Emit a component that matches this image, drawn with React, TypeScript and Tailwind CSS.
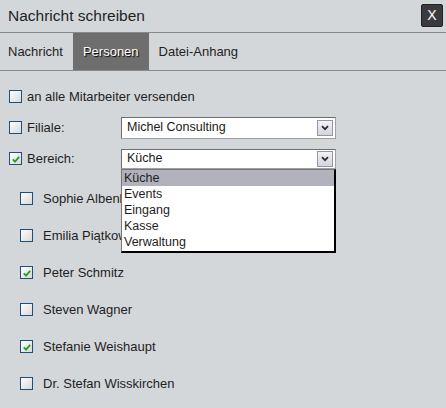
import { useState } from 'react';

const people = [
  { name: 'Sophie Albenberg', checked: false },
  { name: 'Emilia Piątkowska', checked: false },
  { name: 'Peter Schmitz', checked: true },
  { name: 'Steven Wagner', checked: false },
  { name: 'Stefanie Weishaupt', checked: true },
  { name: 'Dr. Stefan Wisskirchen', checked: false },
];

const bereiche = ['Küche', 'Events', 'Eingang', 'Kasse', 'Verwaltung'];

function Checkbox({ checked }: { checked?: boolean }) {
  return (
    <div className="relative w-[13px] h-[13px] shrink-0 border border-[#1f4f7a] bg-gradient-to-br from-white to-[#d8d8d8]">
      {checked && (
        <svg className="absolute left-[2px] top-[3px]" width="8" height="7" viewBox="0 0 8 7">
          <path d="M0.8 3.4 L3 5.6 L7.2 0.8" fill="none" stroke="#23a023" strokeWidth="1.8" />
        </svg>
      )}
    </div>
  );
}

function Select({ value, h }: { value: string; h: string }) {
  return (
    <div className={`w-[215px] ${h} flex items-center justify-between bg-white border border-[#a0a0a0] border-t-[#6e6e6e] border-l-[#6e6e6e] pl-[5px] pr-[2px]`}>
      <span className="text-[12.5px] text-[#1a1a1a]">{value}</span>
      <div className="w-[16px] h-[16px] flex items-center justify-center border border-[#9494ac] bg-gradient-to-b from-[#f2f2f7] to-[#d4d4de]">
        <svg width="8" height="6" viewBox="0 0 8 6">
          <path d="M1 1.2 L4 4.2 L7 1.2" fill="none" stroke="#2a2a2a" strokeWidth="1.7" />
        </svg>
      </div>
    </div>
  );
}

export default function App() {
  const [tab] = useState('Personen');

  return (
    <div className="w-[446px] h-[408px] bg-[#d4d7da] text-[#1e1e1e] overflow-hidden" style={{ fontFamily: '"Liberation Sans", Arial, sans-serif' }}>
      <div className="h-[33px] flex items-center justify-between pl-[8px] pr-[3px] border-b border-[#8a8a8a]">
        <span className="text-[15.5px] text-[#1e1e1e]">Nachricht schreiben</span>
        <button className="w-[22px] h-[23px] mb-[2px] flex items-center justify-center bg-[#3b3b3f] border border-[#222] rounded-[2px] text-white text-[14px]">
          X
        </button>
      </div>

      <div className="h-[38px] flex border-b border-[#8a8a8a]">
        {['Nachricht', 'Personen', 'Datei-Anhang'].map((t, i) => (
          <div
            key={t}
            className={`flex items-center text-[13px] ${i === 0 ? 'pl-[8px] pr-[10px]' : 'px-[10px]'} ${
              tab === t ? 'bg-[#6e6e6e] text-white [text-shadow:1px_1px_1px_#000]' : 'text-[#1e1e1e]'
            }`}
          >
            {t}
          </div>
        ))}
      </div>

      <div className="pt-[10px] pl-[9px] text-[13px]">
        <div className="h-[31px] flex items-center gap-[5px]">
          <Checkbox />
          <span>an alle Mitarbeiter versenden</span>
        </div>
        <div className="h-[31px] flex items-center">
          <div className="w-[112px] flex items-center gap-[5px]">
            <Checkbox />
            <span>Filiale:</span>
          </div>
          <Select value="Michel Consulting" h="h-[22px]" />
        </div>
        <div className="h-[31px] flex items-center">
          <div className="w-[112px] flex items-center gap-[5px]">
            <Checkbox checked />
            <span>Bereich:</span>
          </div>
          <div className="relative">
            <Select value="Küche" h="h-[20px]" />
            <div className="absolute left-0 top-[20px] w-[215px] z-10 bg-white border border-[#777] border-r-2 border-b-2 border-r-black border-b-black pb-[1px]">
              {bereiche.map((b, i) => (
                <div
                  key={b}
                  className={`h-[16px] leading-[16px] pl-[2px] text-[12.5px] ${i === 0 ? 'bg-[#b2b2bd]' : ''}`}
                >
                  {b}
                </div>
              ))}
            </div>
          </div>
        </div>

        <div className="mt-[6px] pl-[11px]">
          {people.map((p) => (
            <div key={p.name} className="h-[37px] flex items-center gap-[10px]">
              <Checkbox checked={p.checked} />
              <span>{p.name}</span>
            </div>
          ))}
        </div>
      </div>
    </div>
  );
}
